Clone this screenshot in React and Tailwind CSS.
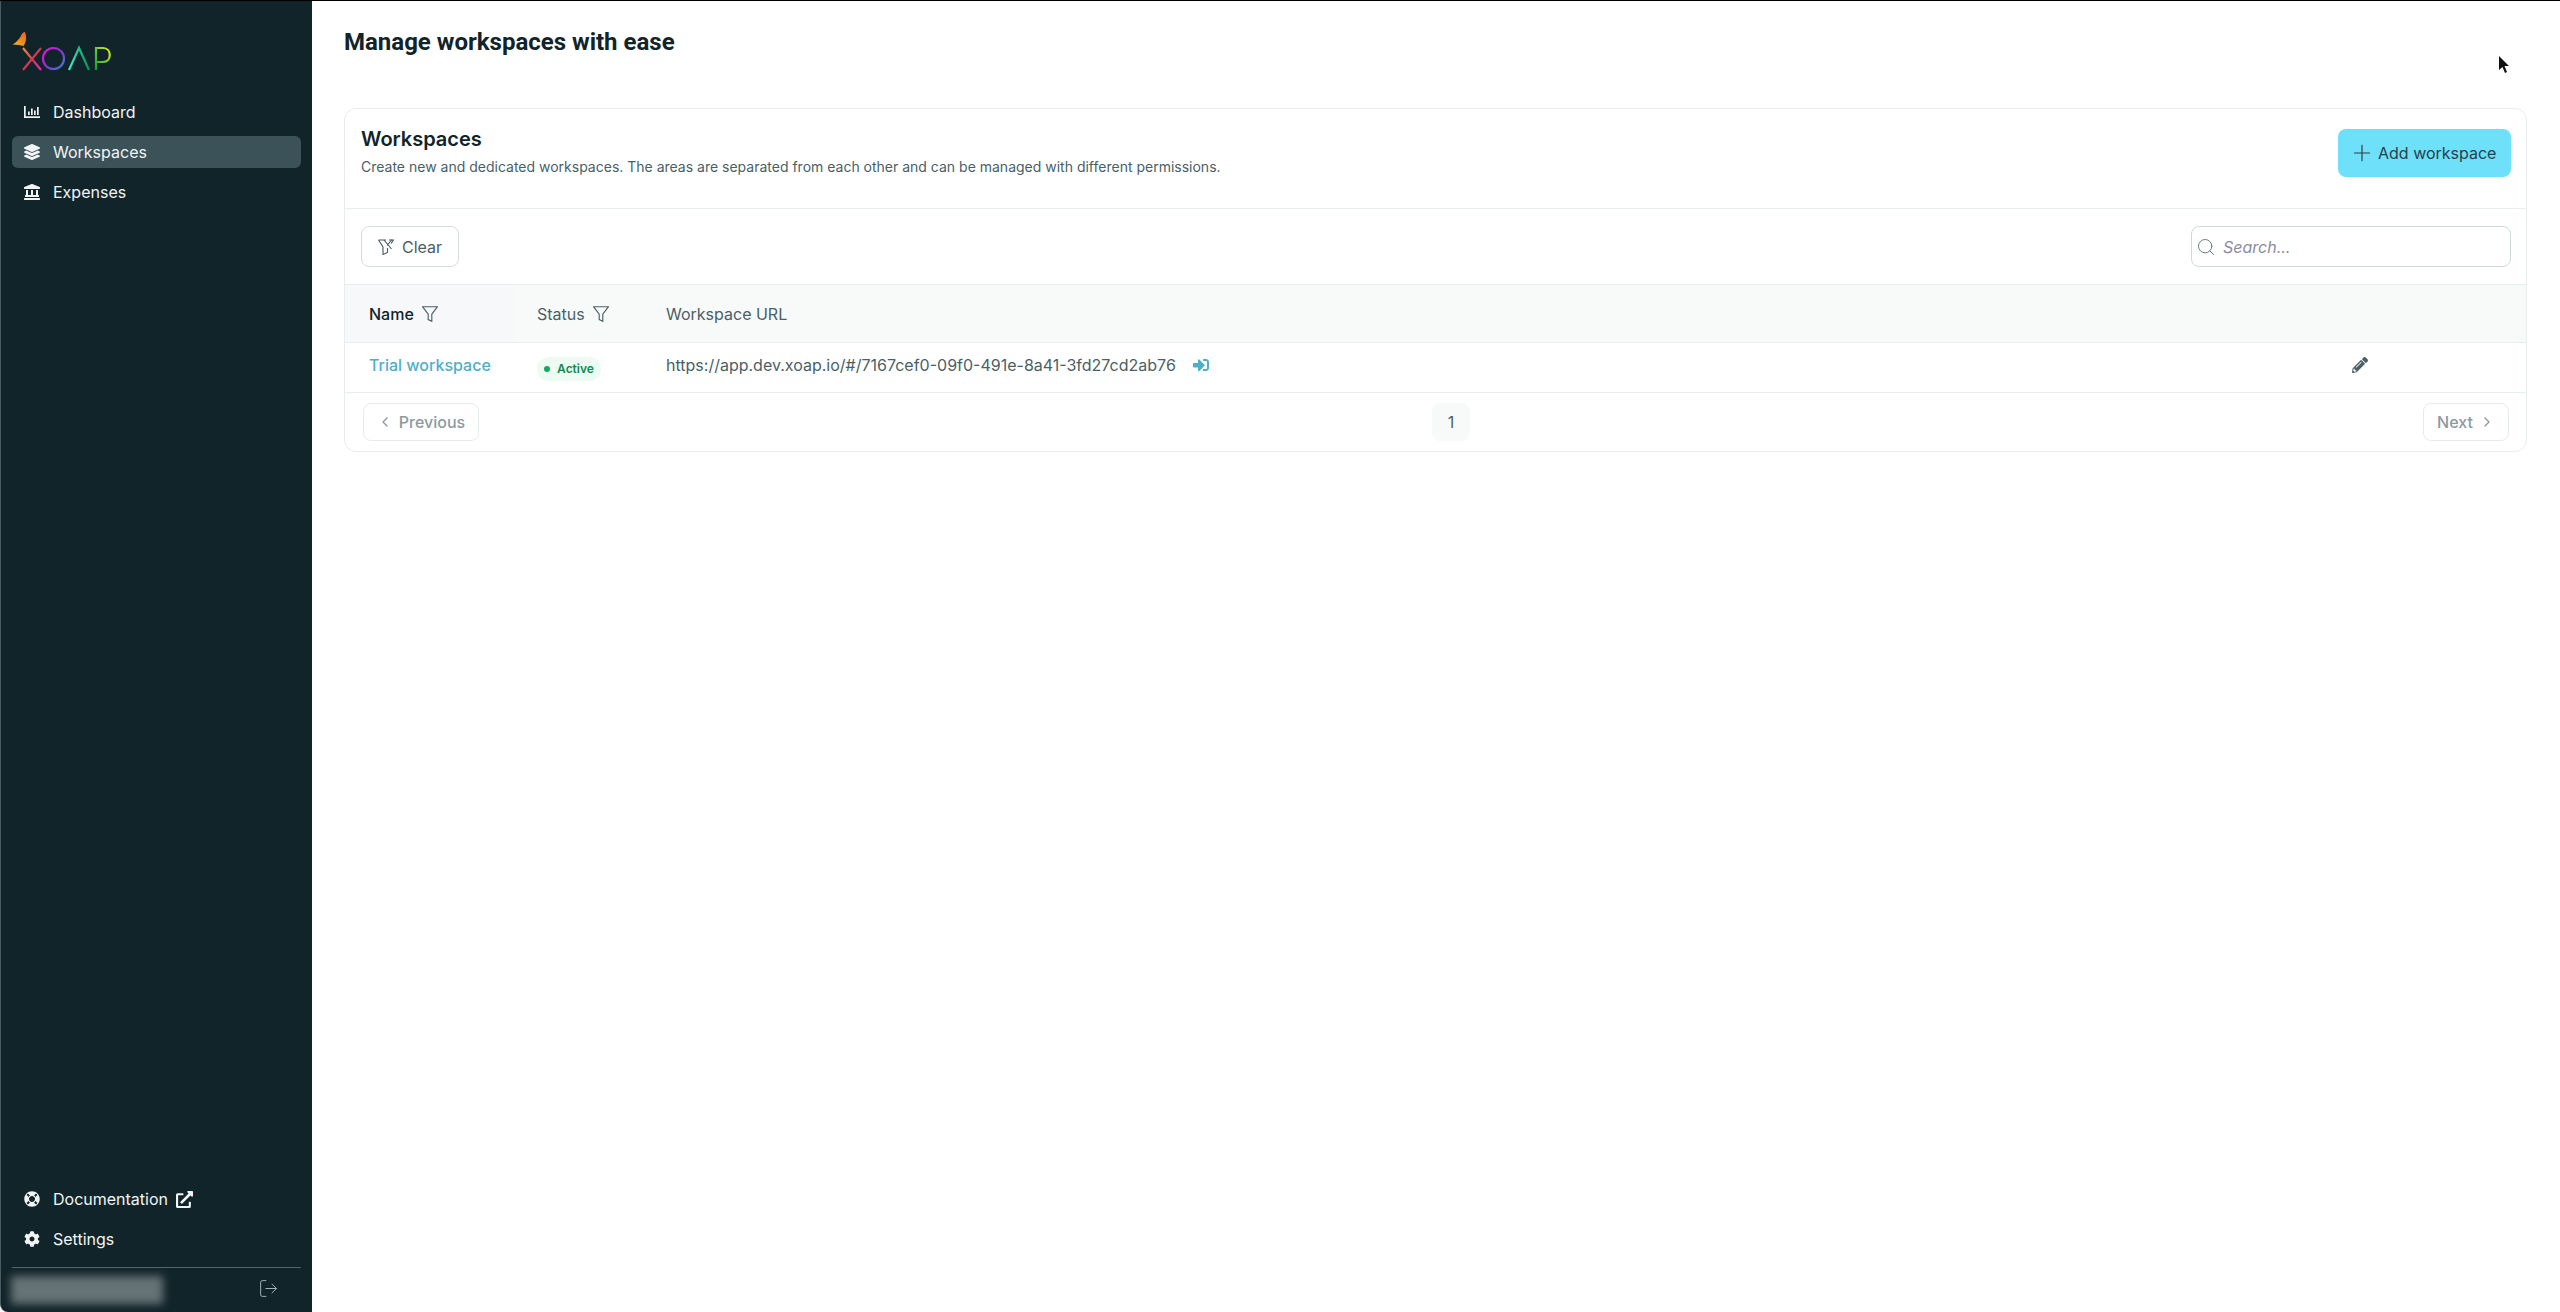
import React from "react";
import {
  FaLandmark,
  FaLayerGroup,
  FaLifeRing,
  FaExternalLinkAlt,
  FaCog,
  FaSignInAlt,
  FaPencilAlt,
} from "react-icons/fa";
import { LogOut, Search, Plus, ChevronLeft, ChevronRight } from "lucide-react";

function Logo() {
  return (
    <svg width="110" height="46" viewBox="0 0 110 46" fill="none" className="ml-3 block overflow-visible">
      <defs>
        <linearGradient id="x1" x1="0" y1="0" x2="1" y2="1">
          <stop offset="0" stopColor="#e8913a" />
          <stop offset="0.55" stopColor="#d03a58" />
          <stop offset="1" stopColor="#f020c0" />
        </linearGradient>
        <linearGradient id="o1" x1="0" y1="0" x2="1" y2="1">
          <stop offset="0" stopColor="#f810e0" />
          <stop offset="0.45" stopColor="#8a30d0" />
          <stop offset="1" stopColor="#3a80c8" />
        </linearGradient>
        <linearGradient id="a1" x1="0" y1="0" x2="1" y2="0">
          <stop offset="0" stopColor="#40e8c8" />
          <stop offset="1" stopColor="#0c9050" />
        </linearGradient>
        <linearGradient id="p1" x1="0" y1="1" x2="1" y2="0">
          <stop offset="0" stopColor="#10a040" />
          <stop offset="1" stopColor="#d8f020" />
        </linearGradient>
        <linearGradient id="b1" x1="0" y1="1" x2="1" y2="0">
          <stop offset="0" stopColor="#f8b820" />
          <stop offset="1" stopColor="#e86020" />
        </linearGradient>
      </defs>
      <path d="M-0.5 14.5 C3 13 6 9 8 6 C9 3 10.5 2 12 2 C13.5 6 14 11 10.5 16 C8 15 4 15 -0.5 14.5 Z" fill="url(#b1)" />
      <path d="M10 18 L28 40" stroke="url(#x1)" strokeWidth="2.2" />
      <path d="M28 18 L10 40" stroke="#cf3a55" strokeWidth="2.2" />
      <circle cx="40.5" cy="28.5" r="10.5" stroke="url(#o1)" strokeWidth="2.2" />
      <path d="M56 40 L66 18 L76 40" stroke="url(#a1)" strokeWidth="2.2" />
      <path d="M83 40 V18 H90 C99 18 99 32 90 32 H83" stroke="url(#p1)" strokeWidth="2.2" />
    </svg>
  );
}

function ChartIcon() {
  return (
    <svg width="16" height="12" viewBox="0 0 16 12" fill="currentColor">
      <rect x="0" y="0" width="1.7" height="12" />
      <rect x="0" y="10.3" width="16" height="1.7" />
      <rect x="4" y="5.5" width="1.7" height="3.5" />
      <rect x="7" y="2.5" width="1.7" height="6.5" />
      <rect x="10" y="4.5" width="1.7" height="4.5" />
      <rect x="13" y="1" width="1.7" height="8" />
    </svg>
  );
}

function ClearFilterIcon() {
  return (
    <svg width="16" height="16" viewBox="0 0 16 16" fill="none" stroke="#4a5f66" strokeWidth="1.15">
      <path d="M0.5 1 H8 M0.5 1 L5 8 V15.5 L9.5 13.5 V9" />
      <path d="M11 1 H15.5 L13 4.5" />
      <path d="M6 1 L13.5 10 M14 0.5 L9 6.5" />
    </svg>
  );
}

function FunnelIcon() {
  return (
    <svg width="16" height="16" viewBox="0 0 16 16" fill="none" stroke="#4a5f66" strokeWidth="1.15">
      <path d="M0.5 0.7 H15.5 L9.8 8.2 V15.3 L6.2 13.6 V8.2 Z" />
    </svg>
  );
}

function NavItem({ icon, label, active, extra }) {
  return (
    <a
      className={`flex h-8 items-center gap-[13px] rounded-md pl-3 text-base text-[#f1f4f5] ${
        active ? "bg-[#3b5259]" : ""
      }`}
    >
      <span className="flex w-4 justify-center">{icon}</span>
      <span>{label}</span>
      {extra}
    </a>
  );
}

export default function App() {
  return (
    <div className="flex h-screen w-full overflow-hidden border-t border-black bg-white font-['Inter',sans-serif] text-[#4a5f66]">
      <aside className="flex w-[312px] shrink-0 flex-col rounded-bl-lg border-l border-[#4a5a5f] bg-[#11242a]">
        <div className="pt-[29px]">
          <Logo />
        </div>
        <nav className="mt-[20px] flex flex-col gap-2 px-[11px]">
          <NavItem icon={<ChartIcon />} label="Dashboard" />
          <NavItem icon={<FaLayerGroup size={16} />} label="Workspaces" active />
          <NavItem icon={<FaLandmark size={16} />} label="Expenses" />
        </nav>
        <div className="mt-auto flex flex-col gap-2 px-[11px]">
          <NavItem
            icon={<FaLifeRing size={16} />}
            label="Documentation"
            extra={<FaExternalLinkAlt size={17} className="-ml-[5px]" />}
          />
          <NavItem icon={<FaCog size={16} />} label="Settings" />
        </div>
        <div className="mx-[11px] mt-3 border-t border-[#51666c]" />
        <div className="mb-2 mt-2 flex h-7 items-center justify-between pr-[33px] pl-[10px]">
          <div className="h-7 w-[152px] bg-[#667376] blur-[4px]" />
          <LogOut size={21} strokeWidth={1.1} className="-mt-1 text-[#a9b6b9]" />
        </div>
      </aside>

      <main className="relative min-w-0 flex-1 pt-[25px] pr-[33px] pl-[32px]">
        <h1 className="h-[32px] font-['Roboto',sans-serif] text-2xl leading-8 font-bold text-[#11242a]">
          Manage workspaces with ease
        </h1>
        <section className="mt-[50px] overflow-hidden rounded-xl border border-[#e8edee]">
          <div className="flex h-[100px] items-center justify-between border-b border-[#e8edee] pr-[15px] pl-4">
            <div className="-mt-[16px]">
              <h2 className="text-xl leading-7 font-semibold text-[#11242a]">Workspaces</h2>
              <p className="mt-[4px] text-sm leading-5">
                Create new and dedicated workspaces. The areas are separated from each other and can be managed with different permissions.
              </p>
            </div>
            <button className="-mt-[11px] flex h-12 w-[173px] items-center gap-[3px] rounded-lg bg-[#6ee0f9] pl-[11px] text-base text-[#2a4048]">
              <Plus size={26} strokeWidth={1.1} />
              Add workspace
            </button>
          </div>

          <div className="flex h-[75px] items-center justify-between pr-[15px] pl-4">
            <button className="flex h-[41px] w-[98px] items-center justify-center gap-2 rounded-lg border border-[#d5dcdf] text-base">
              <ClearFilterIcon />
              Clear
            </button>
            <div className="flex h-[41px] w-[320px] items-center gap-[7px] rounded-lg border border-[#d0d8da] pl-1">
              <Search size={20} strokeWidth={1.15} className="shrink-0 text-[#66767c]" />
              <input
                placeholder="Search..."
                className="w-full bg-transparent text-base italic outline-none placeholder:text-[#8b8ca3]"
              />
            </div>
          </div>

          <table className="w-full table-fixed border-collapse text-left text-base">
            <thead>
              <tr className="h-[58px] border-y border-[#e8edee] bg-[#f8fafa]">
                <th className="w-[170px] bg-[#f6f8f9] pl-6 font-medium text-[#11242a]">
                  <span className="flex items-center gap-2">Name <FunnelIcon /></span>
                </th>
                <th className="w-[135px] pl-[22px] font-normal">
                  <span className="flex items-center gap-2">Status <FunnelIcon /></span>
                </th>
                <th className="pl-4 font-normal">Workspace URL</th>
                <th className="w-[192px]" />
              </tr>
            </thead>
            <tbody>
              <tr className="h-[50px] border-b border-[#e8edee]">
                <td className="pb-[5px] pl-6 font-medium text-[#4db0c8]">Trial workspace</td>
                <td className="pb-[1px] pl-[22px]">
                  <span className="inline-flex h-6 w-16 items-center justify-center gap-[7px] rounded-full bg-[#ecfcf3] text-xs font-semibold text-[#0b8a50]">
                    <span className="size-[6px] rounded-full bg-[#12a860]" />
                    Active
                  </span>
                </td>
                <td className="pb-[5px] pl-4">
                  <span className="flex items-center gap-[17px]">
                    https://app.dev.xoap.io/#/7167cef0-09f0-491e-8a41-3fd27cd2ab76
                    <FaSignInAlt size={16} className="text-[#4db0c8]" />
                  </span>
                </td>
                <td className="pb-[5px] pl-[18px]">
                  <FaPencilAlt size={16} className="text-[#4a5f66]" />
                </td>
              </tr>
            </tbody>
          </table>

          <div className="flex h-[58px] items-center justify-between pr-[17px] pl-[18px]">
            <button className="flex h-[38px] w-[116px] items-center justify-center gap-[6px] rounded-lg border border-[#e6ebec] text-base font-medium text-[#8c9a9e]">
              <ChevronLeft size={16} />
              Previous
            </button>
            <span className="flex size-[38px] items-center justify-center rounded-lg bg-[#f8fafa] text-base">1</span>
            <button className="flex h-[38px] w-[86px] items-center justify-center gap-[6px] rounded-lg border border-[#e6ebec] text-base font-medium text-[#8c9a9e]">
              Next
              <ChevronRight size={16} />
            </button>
          </div>
        </section>

        <svg width="14" height="20" viewBox="0 0 14 20" className="absolute top-[54px] right-[49px]">
          <path d="M2 1 V15 L5.5 12 L8 18 L10 17 L7.5 11 H12 Z" fill="#111" />
        </svg>
      </main>
    </div>
  );
}
